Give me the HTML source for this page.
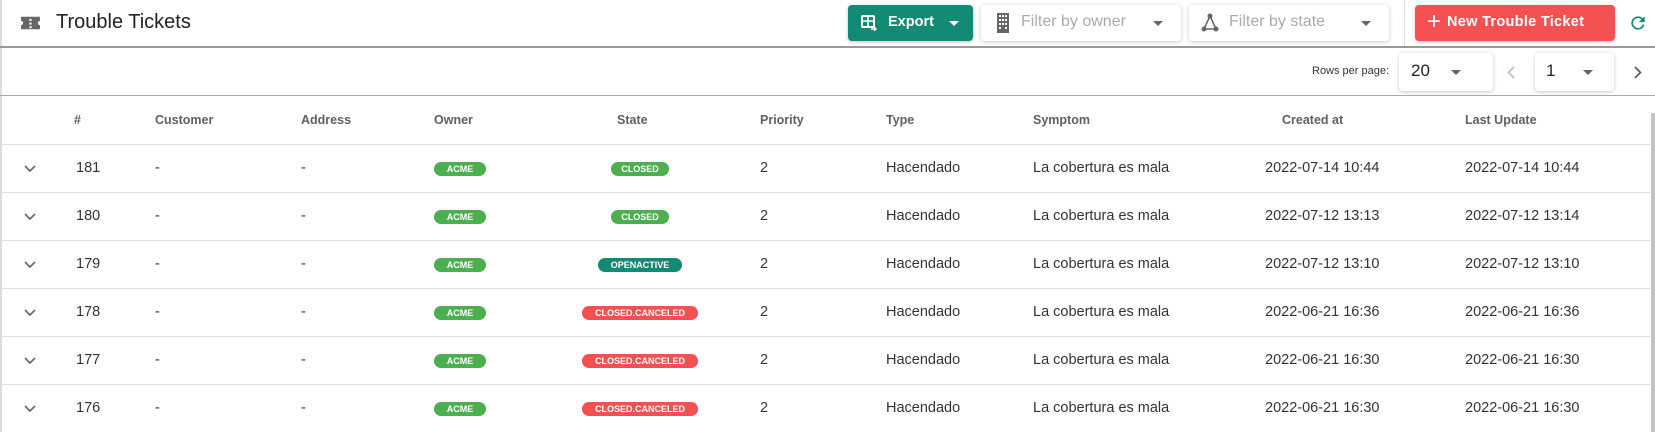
<!DOCTYPE html>
<html><head><style>
*{box-sizing:border-box;margin:0;padding:0}
body{width:1655px;height:432px;overflow:hidden;background:#fff;font-family:"Liberation Sans",sans-serif;color:#333;position:relative}
.a{position:absolute}
.btn{position:absolute;border-radius:4px;box-shadow:0 1px 3px rgba(0,0,0,.25)}
.sel{position:absolute;background:#fff;border-radius:4px;box-shadow:0 1px 4px rgba(0,0,0,.22)}
.caret{position:absolute;width:0;height:0;border-left:5px solid transparent;border-right:5px solid transparent;border-top:5px solid #666}
.h{position:absolute;top:113px;font-size:12.5px;font-weight:bold;color:#5f5f5f}
.row{position:absolute;left:2px;width:1648px;height:48px;border-top:1px solid #ddd}
.c{position:absolute;top:15px;font-size:14.5px;color:#333}
.b{position:absolute;top:17px;height:14px;border-radius:7px;color:#fff;font-size:9px;font-weight:bold;text-align:center;line-height:14px}
.g{background:#4caf50}.t{background:#138a74}.r{background:#f44f52}
</style></head><body>
<div class="a" style="left:0;top:0;width:2px;height:432px;background:#ddd"></div>
<svg class="a" style="left:20px;top:13px" width="21" height="20" viewBox="0 0 20 18"><path d="M1 3h18v4a2 2 0 0 0 0 4v4H1v-4a2 2 0 0 0 0-4z" fill="#666"/><rect x="9" y="5" width="2" height="2" fill="#fff"/><rect x="9" y="8.5" width="2" height="2" fill="#fff"/><rect x="9" y="12" width="2" height="2" fill="#fff"/></svg>
<div class="a" style="left:56px;top:11px;font-size:20px;color:#222">Trouble Tickets</div>
<div class="btn" style="left:848px;top:5px;width:125px;height:36px;background:#138a74"></div>
<svg class="a" style="left:861px;top:15px" width="16" height="16" viewBox="0 0 16 16"><rect x="1" y="1" width="12" height="11" rx="1" fill="none" stroke="#fff" stroke-width="2"/><path d="M1 6h12M7 1v11" stroke="#fff" stroke-width="1.6"/><path d="M10 14h5M13 12l2 2-2 2" stroke="#fff" stroke-width="1.4" fill="none"/></svg>
<div class="a" style="left:888px;top:14px;color:#fff;font-weight:bold;font-size:14.5px">Export</div>
<div class="caret" style="left:949px;top:21px;border-top-color:#fff"></div>
<div class="sel" style="left:981px;top:5px;width:200px;height:36px"></div>
<svg class="a" style="left:996px;top:13px" width="14" height="20" viewBox="0 0 14 20"><rect x="1" y="0" width="12" height="20" fill="#666"/><g fill="#fff"><rect x="3" y="2" width="2" height="2"/><rect x="6" y="2" width="2" height="2"/><rect x="9" y="2" width="2" height="2"/><rect x="3" y="6" width="2" height="2"/><rect x="6" y="6" width="2" height="2"/><rect x="9" y="6" width="2" height="2"/><rect x="3" y="10" width="2" height="2"/><rect x="6" y="10" width="2" height="2"/><rect x="9" y="10" width="2" height="2"/><rect x="3" y="14" width="2" height="2"/><rect x="9" y="14" width="2" height="2"/></g></svg>
<div class="a" style="left:1021px;top:13px;font-size:16px;color:#aaa">Filter by owner</div>
<div class="caret" style="left:1153px;top:21px"></div>
<div class="sel" style="left:1189px;top:5px;width:200px;height:36px"></div>
<svg class="a" style="left:1201px;top:13px" width="18" height="20" viewBox="0 0 18 20"><path d="M9 3L3 16M9 3l6 13M3 16h12" stroke="#666" stroke-width="1.5" fill="none"/><circle cx="9" cy="3" r="2.5" fill="#666"/><circle cx="3" cy="16" r="2.5" fill="#666"/><circle cx="15" cy="16" r="2.5" fill="#666"/></svg>
<div class="a" style="left:1229px;top:13px;font-size:16px;color:#aaa">Filter by state</div>
<div class="caret" style="left:1361px;top:21px"></div>
<div class="a" style="left:1404px;top:0;width:1px;height:46px;background:#ddd"></div>
<div class="btn" style="left:1415px;top:5px;width:200px;height:36px;background:#f55052"></div>
<div class="a" style="left:1427px;top:8px;color:#fff;font-size:24px;font-weight:300">+</div>
<div class="a" style="left:1447px;top:14px;color:#fff;font-weight:bold;font-size:14.5px;letter-spacing:.3px">New Trouble Ticket</div>
<svg class="a" style="left:1628px;top:13px" width="20" height="20" viewBox="0 0 24 24"><path d="M17.65 6.35A7.96 7.96 0 0 0 12 4a8 8 0 1 0 7.73 10h-2.08A6 6 0 1 1 12 6c1.66 0 3.14.69 4.22 1.78L13 11h7V4z" fill="#138a74"/></svg>
<div class="a" style="left:0;top:46px;width:1655px;height:2px;background:#999"></div>
<div class="a" style="left:1312px;top:65px;font-size:11px;color:#333">Rows per page:</div>
<div class="sel" style="left:1399px;top:53px;width:94px;height:38px"></div>
<div class="a" style="left:1411px;top:61px;font-size:17px;color:#222">20</div>
<div class="caret" style="left:1451px;top:70px"></div>
<svg class="a" style="left:1507px;top:66px" width="8" height="13" viewBox="0 0 8 13"><path d="M7 1L1.5 6.5 7 12" stroke="#bbb" stroke-width="1.6" fill="none"/></svg>
<div class="sel" style="left:1535px;top:53px;width:79px;height:38px"></div>
<div class="a" style="left:1546px;top:61px;font-size:17px;color:#222">1</div>
<div class="caret" style="left:1583px;top:70px"></div>
<svg class="a" style="left:1634px;top:66px" width="8" height="13" viewBox="0 0 8 13"><path d="M1 1l5.5 5.5L1 12" stroke="#555" stroke-width="1.6" fill="none"/></svg>
<div class="a" style="left:0;top:95px;width:1655px;height:1px;background:#aaa"></div>
<div class="a" style="left:1651px;top:113px;width:4px;height:319px;background:#c4c4c4"></div>
<div class="h" style="left:74px">#</div>
<div class="h" style="left:155px">Customer</div>
<div class="h" style="left:301px">Address</div>
<div class="h" style="left:434px">Owner</div>
<div class="h" style="left:617px">State</div>
<div class="h" style="left:760px">Priority</div>
<div class="h" style="left:886px">Type</div>
<div class="h" style="left:1033px">Symptom</div>
<div class="h" style="left:1282px">Created at</div>
<div class="h" style="left:1465px">Last Update</div>
<div id="rows"></div>
<script>
var d=[["181","CLOSED","g",58,"2022-07-14 10:44","2022-07-14 10:44"],["180","CLOSED","g",58,"2022-07-12 13:13","2022-07-12 13:14"],["179","OPENACTIVE","t",84,"2022-07-12 13:10","2022-07-12 13:10"],["178","CLOSED.CANCELED","r",116,"2022-06-21 16:36","2022-06-21 16:36"],["177","CLOSED.CANCELED","r",116,"2022-06-21 16:30","2022-06-21 16:30"],["176","CLOSED.CANCELED","r",116,"2022-06-21 16:30","2022-06-21 16:30"]];
var h="";d.forEach(function(r,i){var y=144+i*48;
h+='<div class="row" style="top:'+y+'px">'+
'<svg class="a" style="left:22px;top:20px" width="12" height="8" viewBox="0 0 12 8"><path d="M1 1l5 5 5-5" stroke="#666" stroke-width="1.6" fill="none"/></svg>'+
'<div class="c" style="left:74px">'+r[0]+'</div><div class="c" style="left:153px">-</div><div class="c" style="left:299px">-</div>'+
'<div class="b g" style="left:432px;width:52px">ACME</div>'+
'<div class="b '+r[2]+'" style="left:'+(638-r[3]/2)+'px;width:'+r[3]+'px">'+r[1]+'</div>'+
'<div class="c" style="left:758px">2</div><div class="c" style="left:884px">Hacendado</div><div class="c" style="left:1031px">La cobertura es mala</div>'+
'<div class="c" style="left:1263px">'+r[4]+'</div><div class="c" style="left:1463px">'+r[5]+'</div></div>';});
document.getElementById("rows").innerHTML=h;
</script>
</body></html>
